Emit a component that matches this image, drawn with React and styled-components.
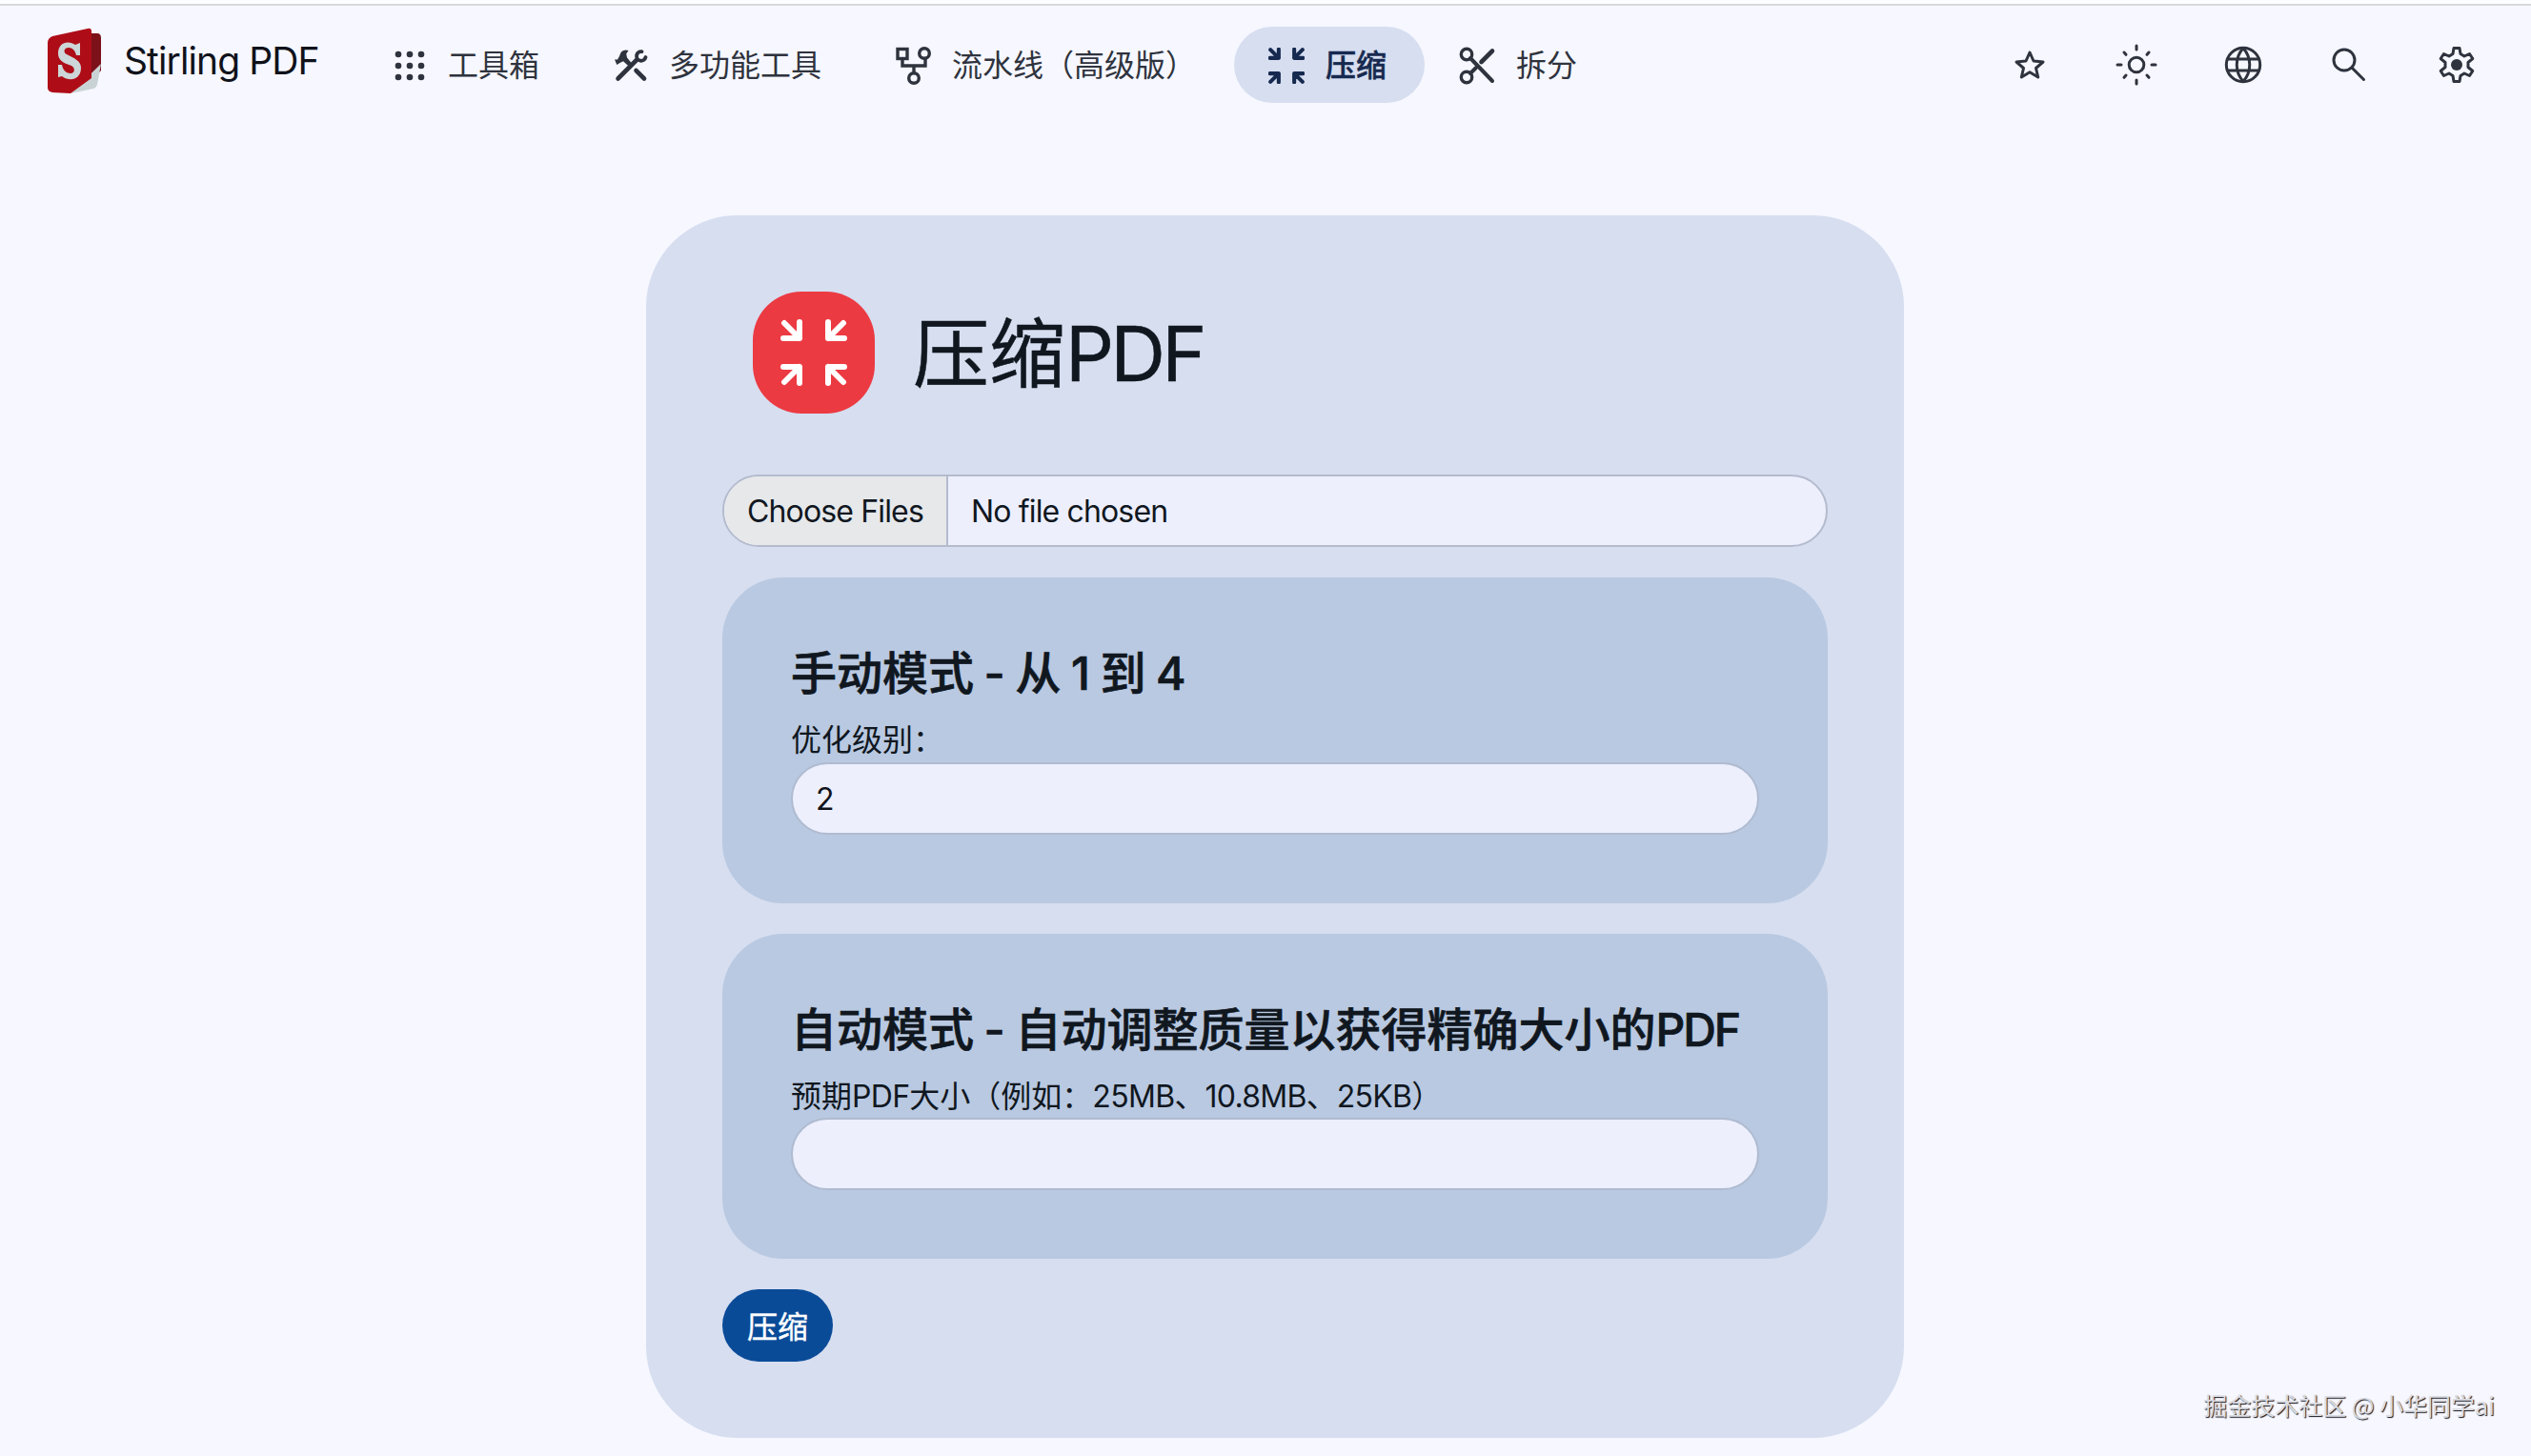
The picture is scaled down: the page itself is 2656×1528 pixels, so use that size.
import React, { useState } from "react";
import styled, { createGlobalStyle } from "styled-components";

const GlobalStyle = createGlobalStyle`
    html, body {
        margin: 0;
        padding: 0;
        background-color: #f6f7ff;
    }
    body, input, button {
        font-family: Inter, "Noto Sans CJK SC", sans-serif;
    }
`;

const Page = styled.div`
    position: relative;
    display: flex;
    flex-direction: column;
    height: 1528px;
    width: 2656px;
    overflow: hidden;
    box-sizing: border-box;
    border-top: 4px solid #fcfdff;
    color: #10171f;
`;

const Navbar = styled.nav`
    display: flex;
    align-items: center;
    height: 128px;
    padding: 0 22px 2px 49px;
    box-sizing: border-box;
    border-top: 2px solid #d9d9dc;
    color: #2f333d;
`;

const Brand = styled.a`
    display: flex;
    align-items: center;
    width: 325px;
    margin-top: -8px;
    color: #10121a;
`;

const BrandName = styled.span`
    margin-left: 23px;
    margin-top: -2px;
    font-size: 39px;
    letter-spacing: -0.9px;
    white-space: nowrap;
`;

const NavItem = styled.a`
    display: flex;
    align-items: center;
    height: 80px;
    padding: 1px 36px 0;
    width: ${(props) => props.$width}px;
    box-sizing: border-box;
    border-radius: 40px;
    font-size: 32px;
    font-weight: ${(props) => (props.$active ? 500 : 400)};
    -webkit-text-stroke: ${(props) => (props.$active ? 0.5 : 0)}px;
    color: ${(props) => (props.$active ? "#16294f" : "inherit")};
    background-color: ${(props) => (props.$active ? "#d6def0" : "transparent")};
    white-space: nowrap;
    line-height: 41px;
    svg {
        flex: none;
        margin-right: ${(props) => (props.$active ? 22 : 20)}px;
    }
`;

const NavTools = styled.div`
    display: flex;
    margin-left: auto;
`;

const NavTool = styled.a`
    display: flex;
    align-items: center;
    justify-content: center;
    width: 112px;
    height: 80px;
`;

const Card = styled.main`
    display: flex;
    flex-direction: column;
    align-items: stretch;
    width: 1320px;
    height: 1283px;
    margin: 94px 0 0 678px;
    padding: 80px;
    box-sizing: border-box;
    border-radius: 96px;
    background-color: #d6def0;
`;

const ToolHeader = styled.div`
    display: flex;
    align-items: center;
    margin-left: 32px;
    height: 128px;
`;

const ToolIcon = styled.div`
    display: flex;
    align-items: center;
    justify-content: center;
    width: 128px;
    height: 128px;
    border-radius: 51px;
    color: #fff;
    background-color: #ec3a42;
`;

const ToolTitle = styled.h1`
    margin: 2px 0 0 40px;
    font-size: 80px;
    font-weight: 400;
    line-height: 128px;
    white-space: nowrap;
    -webkit-text-stroke: 0.5px;
`;

const Latin = styled.span`
    letter-spacing: ${(props) => props.$spacing}px;
`;

const FileField = styled.div`
    display: flex;
    height: 76px;
    margin-top: 64px;
    box-sizing: border-box;
    border: 2px solid #b4bbcd;
    border-radius: 38px;
    overflow: hidden;
    font-size: 32px;
    line-height: 74px;
    letter-spacing: -0.85px;
    background-color: #edeffd;
`;

const FileButton = styled.span`
    width: 235px;
    padding-left: 24px;
    box-sizing: border-box;
    border-right: 2px solid #b4bbcd;
    background-color: #e6e8ea;
`;

const FileName = styled.span`
    padding-left: 24px;
`;

const Panel = styled.section`
    height: ${(props) => props.$height}px;
    margin-top: 32px;
    padding: 72px;
    box-sizing: border-box;
    border-radius: 64px;
    background-color: #b9c9e1;
`;

const PanelTitle = styled.h4`
    margin: 0 0 16px;
    font-size: 48px;
    font-weight: 500;
    line-height: 58px;
    word-spacing: -2.2px;
    white-space: nowrap;
    -webkit-text-stroke: 0.7px;
`;

const Label = styled.label`
    display: block;
    height: ${(props) => props.$height}px;
    font-size: 32px;
    line-height: 50px;
    white-space: nowrap;
`;

const Field = styled.input`
    display: block;
    width: 100%;
    height: 76px;
    padding: 0 24px;
    box-sizing: border-box;
    border: 2px solid #afbbd0;
    border-radius: 38px;
    outline: none;
    font-size: 32px;
    color: #10121a;
    background-color: #edeffd;
`;

const SubmitBtn = styled.button`
    align-self: flex-start;
    width: 116px;
    height: 76px;
    margin-top: 32px;
    padding: 0 0 3px;
    border: none;
    border-radius: 38px;
    font-size: 32px;
    color: #fff;
    background-color: #0a4b98;
    -webkit-text-stroke: 0.4px;
`;

const Watermark = styled.span`
    position: absolute;
    right: 38px;
    bottom: 36px;
    font-size: 25px;
    line-height: 36px;
    font-family: "Noto Sans CJK SC", sans-serif;
    color: #dcdde2;
    text-shadow: 1px 1px 1px #15161c;
`;

const Svg = ({ size = 40, children, ...rest }) => (
    <svg width={size} height={size} viewBox="0 0 40 40" fill="none" stroke="currentColor" strokeWidth="3.4" {...rest}>
        {children}
    </svg>
);

const Logo = () => (
    <svg width="58" height="70" viewBox="0 0 58 70">
        <path d="M44 6h9q4 0 4 5v34L40 64z" fill="#7c1119" />
        <path d="M57 38 53 60q-1 3-4 4L25 69z" fill="#c9d3d5" />
        <path d="M1 16q0-5 5-7L43 1q4-1 4 3v49L25 69 6 68q-5-1-5-5z" fill="#ae0d18" />
        <path d="M35 16v13h-4c-1-5-4-8-8-8-5 0-6 5-2 7 8 4 15 7 15 14 0 13-12 15-20 9l-4 1V39h4c1 6 5 9 9 9 5 0 5-6 1-8C17 37 12 34 12 27c0-12 11-14 18-9z" fill="#cdd6d8" />
    </svg>
);

const DotsIcon = () => (
    <Svg fill="currentColor" stroke="none">
        {[8, 20, 32].map((y) => [8, 20, 32].map((x) => <circle key={`${x}-${y}`} cx={x} cy={y} r="3.3" />))}
    </Svg>
);

const ToolsIcon = () => (
    <Svg strokeWidth="4.6" strokeLinecap="round">
        <path d="M6.5 33.5 26 14M25.5 25 34 33.5" />
        <path d="M31.5 5.2a4.8 4.8 0 1 0 4 5.8" strokeWidth="3.8" />
        <path d="M3 13.500 5.300 19l3.200-2L12 15.300l5.500 5L20.500 17 16 11.500 15.200 7.500 17.500 4Q10 2 8 10l-2 3.500z" fill="currentColor" stroke="none" />
    </Svg>
);

const PipelineIcon = () => (
    <Svg>
        <rect x="3" y="2.5" width="10" height="10" />
        <circle cx="31" cy="7" r="5.3" />
        <circle cx="20" cy="33" r="5.3" />
        <path d="M8 12v8h24v-8M20 20v8" />
    </Svg>
);

const CompressIcon = ({ size, strokeWidth }) => (
    <svg width={size} height={size} viewBox="0 0 70 70" fill="none" stroke="currentColor" strokeWidth={strokeWidth} strokeLinecap="round" strokeLinejoin="round">
        <path d="M3 20h17V3M4 4l16 16M67 20H50V3M66 4 50 20M3 50h17v17M4 66l16-16M67 50H50v17M66 66 50 50" />
    </svg>
);

const ScissorsIcon = () => (
    <Svg strokeWidth="4">
        <circle cx="8" cy="8" r="5.7" strokeWidth="3.4" />
        <circle cx="8" cy="32" r="5.7" strokeWidth="3.4" />
        <path d="m12 12 23 24M12 28l6-6" strokeLinecap="round" />
        <path d="M23.5 16 35 4.5" strokeWidth="4.6" strokeLinecap="round" />
    </Svg>
);

const StarIcon = () => (
    <Svg strokeWidth="3" strokeLinejoin="round">
        <path d="m20 7 4 9 10 1-7.5 6.5 2.2 9.5-8.7-5.2-8.7 5.2 2.2-9.5L6 17l10-1z" />
    </Svg>
);

const SunIcon = () => (
    <Svg size={60} viewBox="-10 -10 60 60" strokeWidth="3" strokeLinecap="round">
        <circle cx="20" cy="20" r="7.8" />
        <path d="M20 0v4M20 36v4M0 20h4M36 20h4M7 7l2 2.3M31 31l2 2.3M33 7l-2 2.3M9 31l-2 2.3" />
    </Svg>
);

const GlobeIcon = () => (
    <Svg strokeWidth="3">
        <circle cx="20" cy="20" r="17.7" />
        <path d="M4 14h32M4 26h32M20 2.5c-9 10-9 25 0 35M20 2.5c9 10 9 25 0 35" />
    </Svg>
);

const SearchIcon = () => (
    <Svg strokeWidth="3" strokeLinecap="round">
        <circle cx="14" cy="15" r="11" />
        <path d="m22 23 12.500 12.500" />
    </Svg>
);

const GearIcon = () => (
    <Svg strokeWidth="3" strokeLinejoin="round">
        <path d="M17 2.500h6l1 6 4 2.500 5.500-2.500 3.300 5-4.800 4v5l4.800 4-3.300 5L28 29l-4 2.500-1 6h-6l-1-6-4-2.500-5.500 2.500-3.300-5L8 22.500v-5l-4.800-4 3.300-5L12 11l4-2.500z" />
        <circle cx="20" cy="20" r="6" fill="currentColor" stroke="none" />
    </Svg>
);

const App = () => {
    const [level, setLevel] = useState("2");
    const [size, setSize] = useState("");

    return (
        <>
            <GlobalStyle />
            <Page>
                <Navbar>
                    <Brand>
                        <Logo />
                        <BrandName>Stirling PDF</BrandName>
                    </Brand>
                    <NavItem $width={232}><DotsIcon />工具箱</NavItem>
                    <NavItem $width={297}><ToolsIcon />多功能工具</NavItem>
                    <NavItem $width={392}><PipelineIcon />流水线（高级版）</NavItem>
                    <NavItem $width={200} $active><CompressIcon size={38} strokeWidth={7.5} />压缩</NavItem>
                    <NavItem $width={200}><ScissorsIcon />拆分</NavItem>
                    <NavTools>
                        <NavTool><StarIcon /></NavTool>
                        <NavTool><SunIcon /></NavTool>
                        <NavTool><GlobeIcon /></NavTool>
                        <NavTool><SearchIcon /></NavTool>
                        <NavTool><GearIcon /></NavTool>
                    </NavTools>
                </Navbar>
                <Card>
                    <ToolHeader>
                        <ToolIcon><CompressIcon size={70} strokeWidth={6} /></ToolIcon>
                        <ToolTitle>压缩<Latin $spacing={-3.8}>PDF</Latin></ToolTitle>
                    </ToolHeader>
                    <FileField>
                        <FileButton>Choose Files</FileButton>
                        <FileName>No file chosen</FileName>
                    </FileField>
                    <Panel $height={342}>
                        <PanelTitle>手动模式 - 从 1 到 4</PanelTitle>
                        <Label $height={48}>优化级别：</Label>
                        <Field value={level} onChange={(e) => setLevel(e.target.value)} />
                    </Panel>
                    <Panel $height={341}>
                        <PanelTitle>自动模式 - 自动调整质量以获得精确大小的<Latin $spacing={-2}>PDF</Latin></PanelTitle>
                        <Label $height={47}>
                            预期<Latin $spacing={-0.7}>PDF</Latin>大小（例如：<Latin $spacing={-0.7}>25MB</Latin>、<Latin $spacing={-0.7}>10.8MB</Latin>、<Latin $spacing={-0.7}>25KB</Latin>）
                        </Label>
                        <Field value={size} onChange={(e) => setSize(e.target.value)} />
                    </Panel>
                    <SubmitBtn>压缩</SubmitBtn>
                </Card>
                <Watermark>掘金技术社区 @ 小华同学ai</Watermark>
            </Page>
        </>
    )
}

export default App;
